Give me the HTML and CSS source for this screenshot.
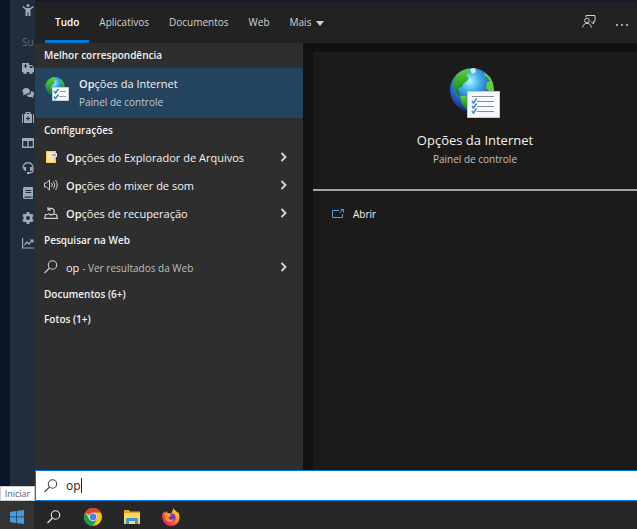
FILE: index.html
```html
<!DOCTYPE html>
<html lang="pt-BR">
<head>
    <meta charset="UTF-8">
    <meta name="viewport" content="width=device-width, initial-scale=1.0">
    <title>Pesquisa</title>
    <link rel="stylesheet" href="styles.css">
</head>
<body>
    <!-- Shared icons -->
    <svg class="sprite" aria-hidden="true">
        <defs>
            <radialGradient id="sea" cx="0.45" cy="0.3" r="0.7">
                <stop offset="0" stop-color="#b5f4ff"/>
                <stop offset="0.3" stop-color="#46b5e8"/>
                <stop offset="0.65" stop-color="#2464c4"/>
                <stop offset="1" stop-color="#1b2478"/>
            </radialGradient>
            <linearGradient id="land" x1="0" y1="0" x2="0" y2="1">
                <stop offset="0" stop-color="#5fd23c"/>
                <stop offset="1" stop-color="#0b7a16"/>
            </linearGradient>
        </defs>
        <symbol id="internet-options" viewBox="0 0 50 50">
            <circle cx="22" cy="22" r="22" fill="url(#sea)"/>
            <path fill="url(#land)" d="M17 1 10 4 5 9 3 17 5 21 7 26 10 28 9 23 8 20 12 19 13 16 17 13 19 10 16 8 18 5 21 3z"/>
            <path fill="url(#land)" d="M10 28 16 28 20 32 19 39 17 42 12 36z"/>
            <path fill="#66cc38" d="m35 5 5 4 3 6 1 8-4 1-4-4 1-6 3-1-3-4-3-1z"/>
            <path fill="#d7eadf" d="m20 1 5-1 1 4-3 2-2-2z"/>
            <path fill="#f7f8fb" stroke="#c3c7d2" d="M17.500 23.500h32v26h-32z"/>
            <path stroke="#8b8ba4" d="M22 28.500h22M27 33.500h17M27 38.500h17M27 43.500h17"/>
            <path fill="none" stroke="#3b94c7" stroke-width="1.600" d="m22 33 1.500 2 3-4.500m-4.500 7.500 1.500 2 3-4.500m-4.500 7.500 1.500 2 3-4.500"/>
        </symbol>
        <symbol id="internet-options-small" viewBox="0 0 24 24">
            <circle cx="10" cy="10" r="10" fill="url(#sea)"/>
            <path fill="url(#land)" d="M8 0 3 3 0 8l2 4 2 5 3 1 2-4-4-3 2-3 3-2-1-3 2-2zM16 2l3 4 1 6-3-2-1-4-2-2z"/>
            <path fill="#fafafa" stroke="#c8cbd1" d="M7.500 10.500h16v13h-16z"/>
            <path stroke="#999cac" d="M15 14.500h6M14 19.500h7"/>
            <path fill="none" stroke="#2589c4" stroke-width="1.500" d="m9 14 1.500 2 3-4M9 19.500l1.500 2 3-4"/>
        </symbol>
        <symbol id="magnifier" viewBox="0 0 14 14">
            <g fill="none" stroke="currentColor" stroke-width="1.100">
                <circle cx="8.500" cy="5" r="4.200"/>
                <path d="M5.500 8 .5 13"/>
            </g>
        </symbol>
        <symbol id="chevron" viewBox="0 0 8 10">
            <path fill="none" stroke="currentColor" stroke-width="1.800" d="m1.500 1 4 4-4 4"/>
        </symbol>
    </svg>

    <div class="desktop">
        <nav class="sidebar" aria-label="Atalhos">
            <svg class="side-icon" viewBox="0 0 12 12"><circle cx="6" cy="1.500" r="1.500"/><path d="m1 2 3 2h4l3-2 .8 1.200L8.500 5.500V12h-2V8.500h-1V12h-2V5.500L.2 3.200z"/></svg>
            <span class="side-title">Su</span>
            <svg class="side-icon" viewBox="0 0 12 12"><path fill-rule="evenodd" d="M0 1h7v2h3l2 3v4h-1a2 2 0 0 1-4 0H5a2 2 0 0 1-4 0H0zm3 1v1.500H1.500v1H3V6h1V4.500h1.500v-1H4V2zm5 2v2h3L9.500 4z"/></svg>
            <svg class="side-icon" viewBox="0 0 12 12"><path d="M4 1c5 0 5.500 5.500.5 6L1 8.500 1.500 6C-1 4 1 1 4 1z"/><path d="M9 4c3.500.5 4 3.500 2 5l1 2-3-1c-2.500.2-4-.5-4.500-2C8 8 9.500 6 9 4z"/></svg>
            <svg class="side-icon" viewBox="0 0 12 12"><path fill-rule="evenodd" d="M3.500 2V0h5v2H10v9H2V2zM5 2h2V1H5zm.4 2.500v1.400H4v1.200h1.400v1.400h1.200V7.100H8V5.900H6.600V4.500zM0 2h1v9H0zm11 0h1v9h-1z"/></svg>
            <svg class="side-icon" viewBox="0 0 12 12"><path fill-rule="evenodd" d="M0 1h12v10H0zm1.300 3v5.500h4V4zm5.400 0v5.500h4V4z"/></svg>
            <svg class="side-icon" viewBox="0 0 12 12"><path fill="none" stroke="currentColor" stroke-width="1.300" d="M1 6c0-7 10-7 10 0v2.500c0 2-1.500 2.500-5 2.500"/><path d="M2 5h2v4H3L1 7zm8 0H8v4h1l2-2zM5 10h3v2H5z"/></svg>
            <svg class="side-icon" viewBox="0 0 12 12"><path fill-rule="evenodd" d="M2 0h9v9.500h-.5v1.300h.5V12H2L1 11V1zm1.500 3v1h5.800V3zm0 2v1h5.800V5zM2.500 9.500v1.300h7V9.500z"/></svg>
            <svg class="side-icon" viewBox="0 0 12 12"><path fill-rule="evenodd" d="M4.700 0h2.600l.4 1.700 1 .5 1.600-.5 1.300 2.200L10.400 5v2l1.200 1.100-1.300 2.200-1.600-.5-1 .5-.4 1.700H4.700l-.4-1.700-1-.5-1.600.5L.4 8.100 1.600 7V5L.4 3.900l1.300-2.200 1.600.5 1-.5zM6 4a2 2 0 1 0 0 4 2 2 0 0 0 0-4z"/></svg>
            <svg class="side-icon" viewBox="0 0 12 12"><path fill="none" stroke="currentColor" stroke-width="1.200" d="M.6 1v10H12M2.500 8 5 5l2 2 3.500-4M8 3h3v2.500"/></svg>
        </nav>

        <main class="search-panel">
            <header class="tabs">
                <button class="tab active" type="button">Tudo</button>
                <button class="tab" type="button">Aplicativos</button>
                <button class="tab" type="button">Documentos</button>
                <button class="tab" type="button">Web</button>
                <button class="tab" type="button">Mais <span class="arrow"></span></button>
                <div class="tab-actions">
                    <button class="icon-btn" type="button" aria-label="Comentários">
                        <svg width="14" height="14" viewBox="0 0 14 14" fill="none" stroke="currentColor"><path d="M4 3V1.500h9v6h-1.500V10L9 7.500"/><circle cx="5" cy="6.500" r="2.300"/><path d="M.7 13.500C.7 8 9.300 8 9.300 13.500"/></svg>
                    </button>
                    <button class="icon-btn" type="button" aria-label="Opções">
                        <svg width="12" height="4" viewBox="0 0 12 4" fill="currentColor"><circle cx="1" cy="2" r="1"/><circle cx="6" cy="2" r="1"/><circle cx="11" cy="2" r="1"/></svg>
                    </button>
                </div>
            </header>

            <div class="content">
                <section class="results">
                    <h2>Melhor correspondência</h2>
                    <a class="best-match" href="#">
                        <svg width="24" height="24"><use href="#internet-options-small"/></svg>
                        <span class="best-text">
                            <span class="best-name"><b>Op</b>ções da Internet</span>
                            <span class="best-type">Painel de controle</span>
                        </span>
                    </a>

                    <h2>Configurações</h2>
                    <a class="result" href="#">
                        <svg class="result-icon" viewBox="0 0 14 14"><path fill="#f3cc61" d="M2 1h10v12H2z"/><path fill="#ffe596" d="M3 2h7v10H3z"/><path fill="#d9e8f4" d="M6 3h7v4H6z"/><path fill="#8eb2d0" d="M8 4h4v2H8z"/></svg>
                        <span class="result-name"><b>Op</b>ções do Explorador de Arquivos</span>
                        <svg class="chevron"><use href="#chevron"/></svg>
                    </a>
                    <a class="result" href="#">
                        <svg class="result-icon" viewBox="0 0 14 14" fill="none" stroke="currentColor"><path d="M.5 5v4h1.800L5.500 12V2L2.300 5zM7.500 5q1.500 2 0 4M9.500 3.500q2.500 3.500 0 7M11.500 2q3.500 5 0 10"/></svg>
                        <span class="result-name"><b>Op</b>ções do mixer de som</span>
                        <svg class="chevron"><use href="#chevron"/></svg>
                    </a>
                    <a class="result" href="#">
                        <svg class="result-icon" viewBox="0 0 14 14" fill="none" stroke="currentColor" stroke-width="1.200"><path d="M4 8.500H1.500L.7 12.400h12.600l-.8-3.900H10M4 1v3h3M4.200 4a3.300 3.300 0 1 1 .2 3.500L6 8.500h3"/></svg>
                        <span class="result-name"><b>Op</b>ções de recuperação</span>
                        <svg class="chevron"><use href="#chevron"/></svg>
                    </a>

                    <h2>Pesquisar na Web</h2>
                    <a class="result" href="#">
                        <svg class="result-icon"><use href="#magnifier"/></svg>
                        <span class="result-name">op <small>- Ver resultados da Web</small></span>
                        <svg class="chevron"><use href="#chevron"/></svg>
                    </a>

                    <h2>Documentos (6+)</h2>
                    <h2>Fotos (1+)</h2>
                </section>

                <section class="preview">
                    <div class="preview-head">
                        <svg width="50" height="50"><use href="#internet-options"/></svg>
                        <h1>Opções da Internet</h1>
                        <p>Painel de controle</p>
                    </div>
                    <a class="action" href="#">
                        <svg width="14" height="12" viewBox="0 0 14 12" fill="none" stroke="#4f9fdb"><path d="M8 2.500H1.500v7h10V6M8.500 5 12 1.500M9.500 1.500h3v3"/></svg>
                        Abrir
                    </a>
                </section>
            </div>

            <form class="search-box">
                <label for="search" aria-label="Pesquisar"><svg width="14" height="14"><use href="#magnifier"/></svg></label>
                <input type="text" id="search" value="op" autocomplete="off" autofocus>
                <span class="caret"></span>
            </form>
        </main>
    </div>

    <footer class="taskbar">
        <button class="task start" type="button" aria-label="Iniciar">
            <svg width="14" height="14" viewBox="0 0 14 14" fill="#429ce3"><path d="m0 2 6-.9v5.500H0zM6.700 1 14 0v6.600H6.700zM0 7.300h6v5.600L0 12zm6.700 0H14V14l-7.300-1z"/></svg>
            <span class="tooltip">Iniciar</span>
        </button>
        <button class="task" type="button" aria-label="Pesquisar">
            <svg width="14" height="14"><use href="#magnifier"/></svg>
        </button>
        <button class="task" type="button" aria-label="Chrome">
            <svg width="18" height="18" viewBox="0 0 18 18"><circle cx="9" cy="9" r="9" fill="#fbc116"/><path fill="#dc4437" d="M9 9 1.200 4.500A9 9 0 0 1 16.800 4.500H9z"/><path fill="#179c52" d="M1.200 4.500A9 9 0 0 0 9 18l4-6.800L9 9 5.100 11.200z"/><circle cx="9" cy="9" r="4.300" fill="#f3f3f3"/><circle cx="9" cy="9" r="3.400" fill="#4285f4"/></svg>
        </button>
        <button class="task" type="button" aria-label="Explorador de Arquivos">
            <svg width="18" height="16" viewBox="0 0 18 16"><path fill="#e5a822" d="M1 1h5l1 1.500h10V6H1z"/><path fill="#fbd768" d="M1 4h16v11H1z"/><path fill="#3f97d8" d="M4 9h10l1 1v5h-3v-3H6v3H3v-5z"/></svg>
        </button>
        <button class="task" type="button" aria-label="Firefox">
            <svg width="18" height="18" viewBox="0 0 18 18">
                <defs><linearGradient id="fire" x1="1" y1="0" x2="0.200" y2="1"><stop offset="0" stop-color="#fff04b"/><stop offset="0.450" stop-color="#ff9724"/><stop offset="0.800" stop-color="#fa3650"/><stop offset="1" stop-color="#e31587"/></linearGradient></defs>
                <path fill="url(#fire)" d="M11.500 0c.3 2 3 2.700 4 5l.7-1C20 12 15 18 9 18S-1 12 .6 6L2 3.500l.7 1.500L5 3l.5 2 4 .2z"/>
                <circle cx="9.500" cy="9.500" r="4" fill="#7138bd"/>
                <path fill="#ff9a26" d="M3 6c3-1 5 0 6.500 1L8 8.500c-2 .3-2 2 0 3 1.500.7 3-.5 4 0-2 3.500-8 3-8.500-1z"/>
            </svg>
        </button>
    </footer>
</body>
</html>
```
FILE: styles.css
```css
/* Base styles */
* {
    box-sizing: border-box;
}

body {
    margin: 0;
    height: 100vh;
    display: flex;
    flex-direction: column;
    background-color: #0b1728;
    color: #f2f2f2;
    font-family: 'Segoe UI', 'Open Sans', 'Noto Sans', sans-serif;
    font-size: 10px;
    overflow: hidden;
}

button {
    border: none;
    background: none;
    color: inherit;
    font: inherit;
    padding: 0;
    cursor: pointer;
}

a {
    color: inherit;
    text-decoration: none;
}

h1, h2, p {
    margin: 0;
}

b {
    font-weight: 600;
}

svg {
    flex-shrink: 0;
}

.sprite {
    position: absolute;
    width: 0;
    height: 0;
}

.desktop {
    flex: 1;
    display: flex;
    min-height: 0;
    padding-left: 10px;
}

/* Sidebar of the page behind the menu */
.sidebar {
    width: 25px;
    padding: 4px 0 0 12px;
    display: flex;
    flex-direction: column;
    gap: 13px;
    background-color: #222d3b;
    color: #9daaba;
    overflow: hidden;
}

.side-icon {
    width: 12px;
    height: 12px;
    fill: currentColor;
}

.side-title {
    margin: 6px 0 0;
    line-height: 14px;
    color: #5a6b80;
}

/* Search menu */
.search-panel {
    flex: 1;
    min-width: 0;
    display: flex;
    flex-direction: column;
    border-top: 2px solid #101b2b;
}

.tabs {
    display: flex;
    height: 41px;
    padding-left: 10px;
    background-color: #222222;
    color: #d2d2d2;
}

.tab {
    padding: 0 10px;
    border-top: 2px solid transparent;
    border-bottom: 3px solid transparent;
}

.tab.active {
    border-bottom-color: #0078d7;
    color: #ffffff;
    font-weight: 600;
}

.arrow {
    display: inline-block;
    margin-left: 2px;
    border: 4px solid transparent;
    border-top: 5px solid currentColor;
    border-bottom: none;
}

.tab-actions {
    display: flex;
    gap: 20px;
    margin-left: auto;
    padding-right: 9px;
}

.content {
    flex: 1;
    display: flex;
    min-height: 0;
    background-color: #12110f;
}

/* Result list */
.results {
    width: 42%;
    min-width: 268px;
    max-width: 268px;
    background-color: #2e2e2e;
}

h2 {
    padding-left: 9px;
    font-size: 10px;
    font-weight: 600;
    line-height: 25px;
}

.result + h2 {
    margin-top: 1px;
}

.best-match {
    display: flex;
    gap: 10px;
    height: 50px;
    padding: 9px 10px;
    background-color: #23435f;
}

.best-text {
    display: flex;
    flex-direction: column;
}

.best-name {
    font-size: 11px;
    line-height: 14px;
}

.best-type {
    margin-top: 4px;
    line-height: 14px;
    color: #c2cbd3;
}

.result {
    display: flex;
    align-items: center;
    height: 28px;
    padding: 0 15px 0 9px;
}

.result-icon {
    width: 14px;
    height: 14px;
    color: #d0d0d0;
}

.result-name {
    flex: 1;
    margin-left: 8px;
    font-size: 11px;
    white-space: nowrap;
}

.result-name small {
    font-size: 10px;
    color: #bebebe;
}

.chevron {
    width: 8px;
    height: 10px;
    color: #d8d8d8;
}

/* Preview of the selected result */
.preview {
    flex: 1;
    margin: 9px 0 0 10px;
    background-color: #1c1b1a;
}

.preview-head {
    display: flex;
    flex-direction: column;
    align-items: center;
    padding: 16px 0 20px;
    border-bottom: 2px solid #a5a5a5;
}

.preview-head h1 {
    margin-top: 12px;
    font-size: 13px;
    font-weight: 400;
    line-height: 20px;
}

.preview-head p {
    line-height: 19px;
    color: #c2c2c2;
}

.action {
    display: flex;
    align-items: center;
    gap: 8px;
    padding: 14px 18px;
    line-height: 18px;
}

/* Search input */
.search-box {
    display: flex;
    align-items: center;
    height: 31px;
    padding-left: 8px;
    background-color: #ffffff;
    border: 1px solid #0078d7;
    border-right: none;
    color: #444444;
}

.search-box label {
    display: flex;
}

.search-box input {
    field-sizing: content;
    min-width: 0;
    padding: 0 0 0 8px;
    border: none;
    outline: none;
    background: none;
    caret-color: transparent;
    color: #222222;
    font: inherit;
    font-size: 12px;
}

.caret {
    width: 1px;
    height: 15px;
    background-color: #222222;
}

/* Taskbar */
.taskbar {
    display: flex;
    height: 28px;
    padding-right: 10px;
    background-color: #272727;
}

.task {
    display: flex;
    align-items: center;
    justify-content: center;
    width: 39px;
    padding-top: 3px;
}

.start {
    position: relative;
    width: 34px;
    background-color: #333333;
}

.tooltip {
    position: absolute;
    left: 0;
    bottom: 100%;
    width: 35px;
    background-color: #ffffff;
    border: 1px solid #cccccc;
    color: #606060;
    font-size: 9px;
    line-height: 13px;
}
```
